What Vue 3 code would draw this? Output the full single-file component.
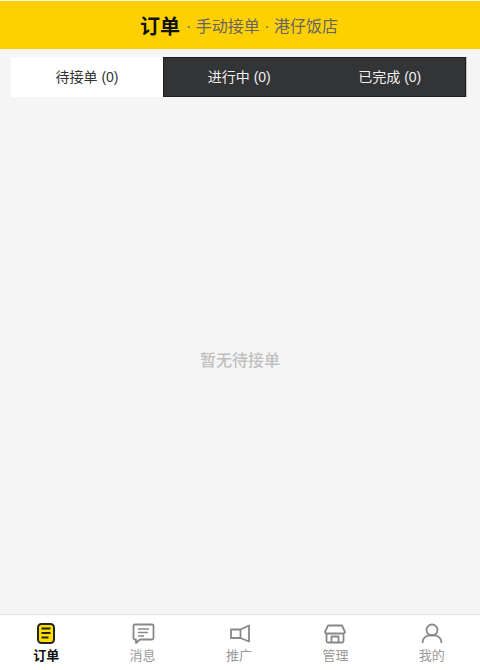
<script setup>
const tabs = [
  { label: '待接单 (0)', active: true },
  { label: '进行中 (0)', active: false },
  { label: '已完成 (0)', active: false },
]
const navItems = [
  { label: '订单', key: 'order', active: true },
  { label: '消息', key: 'msg', active: false },
  { label: '推广', key: 'promo', active: false },
  { label: '管理', key: 'manage', active: false },
  { label: '我的', key: 'mine', active: false },
]
</script>

<template>
  <div class="page">
    <header class="header">
      <span class="title">订单</span>
      <span class="sub">· 手动接单 · 港仔饭店</span>
    </header>

    <div class="tabs">
      <div v-for="t in tabs" :key="t.label" class="tab" :class="{ active: t.active }">{{ t.label }}</div>
    </div>

    <main class="empty">暂无待接单</main>

    <nav class="nav">
      <div v-for="n in navItems" :key="n.key" class="nav-item" :class="{ on: n.active }">
        <svg class="icon" viewBox="0 0 24 24" width="24" height="24" fill="none">
          <template v-if="n.key === 'order'">
            <rect x="4" y="3" width="16" height="19" rx="3.5" fill="#ffdf00" stroke="#222" stroke-width="2" />
            <path d="M7.500 7.500h9M7.500 12h9M7.500 16.500h7" stroke="#222" stroke-width="1.800" />
          </template>
          <template v-else-if="n.key === 'msg'">
            <path d="M4 3.500h17a1.500 1.500 0 0 1 1.500 1.500v12a1.500 1.500 0 0 1-1.500 1.500H9l-4 3.500v-3.500H4A1.500 1.500 0 0 1 2.500 17V5A1.500 1.500 0 0 1 4 3.500z" stroke="#888" stroke-width="1.800" stroke-linejoin="round" />
            <path d="M7 8h11M7 11.500h10M7 15h6" stroke="#888" stroke-width="1.300" />
          </template>
          <template v-else-if="n.key === 'promo'">
            <path d="M4 8.500H13.500L22 4.500V20.500L13.500 17H4z" stroke="#888" stroke-width="1.800" stroke-linejoin="round" />
            <path d="M13.500 8.500V17" stroke="#888" stroke-width="1.800" />
          </template>
          <template v-else-if="n.key === 'manage'">
            <path d="M5 4.500h14l3 6.500c0 1.500-1.500 1.500-3 1.500H5c-1.500 0-3 0-3-1.500z" stroke="#888" stroke-width="1.800" stroke-linejoin="round" />
            <path d="M3.500 12.500V20a1.500 1.500 0 0 0 1.500 1.500h14a1.500 1.500 0 0 0 1.500-1.500v-7.500M8.500 21.500v-6h7v6" stroke="#888" stroke-width="1.800" stroke-linejoin="round" />
          </template>
          <template v-else>
            <circle cx="12" cy="9" r="5.500" stroke="#888" stroke-width="1.800" />
            <path d="M2.500 22c0-5.500 4.500-8 9.500-8s9.500 2.500 9.500 8" stroke="#888" stroke-width="1.800" />
          </template>
        </svg>
        <span class="nav-label">{{ n.label }}</span>
      </div>
    </nav>
  </div>
</template>

<style scoped>
.page {
  width: 480px;
  height: 670px;
  display: flex;
  flex-direction: column;
  background: #f5f5f5;
  font-family: "Liberation Sans", "Noto Sans CJK SC", sans-serif;
  overflow: hidden;
}
.header {
  height: 48px;
  margin-top: 1px;
  padding-right: 2px;
  background: #ffd000;
  display: flex;
  align-items: center;
  justify-content: center;
  gap: 6px;
  flex-shrink: 0;
}
.title {
  font-size: 20px;
  font-weight: 700;
  color: #111;
}
.sub {
  font-size: 16px;
  color: #666;
}
.tabs {
  display: flex;
  margin: 8px 14px 0 11px;
  height: 40px;
  flex-shrink: 0;
  box-shadow: 1px 0 0 #c4c4c4;
}
.tab {
  flex: 1 1 0;
  box-sizing: border-box;
  display: flex;
  align-items: center;
  justify-content: center;
  padding-bottom: 2px;
  font-size: 14px;
  color: #f0f0f0;
  background: #333436;
  border-top: 1px solid #1e1e1e;
  border-bottom: 1px solid #1e1e1e;
}
.tab.active {
  flex: 0 0 152px;
  background: #fff;
  color: #333;
  border: 0;
  padding-bottom: 3px;
}
.tab.active + .tab {
  border-left: 1px solid #1e1e1e;
}
.tab:last-child {
  border-right: 1px solid #1e1e1e;
}
.empty {
  flex: 1;
  display: flex;
  align-items: center;
  justify-content: center;
  padding-top: 6px;
  font-size: 16px;
  font-weight: 500;
  color: #c0c0c0;
}
.nav {
  height: 55px;
  width: 482px;
  margin-left: -2px;
  background: #fff;
  border-top: 1px solid #e4e4e4;
  display: flex;
  flex-shrink: 0;
}
.nav-item {
  flex: 1 1 0;
  display: flex;
  flex-direction: column;
  align-items: center;
  padding-top: 6px;
  gap: 3px;
}
.nav-label {
  font-size: 13px;
  line-height: 16px;
  color: #999;
}
.nav-item.on .nav-label {
  color: #111;
  font-weight: 700;
}
</style>
